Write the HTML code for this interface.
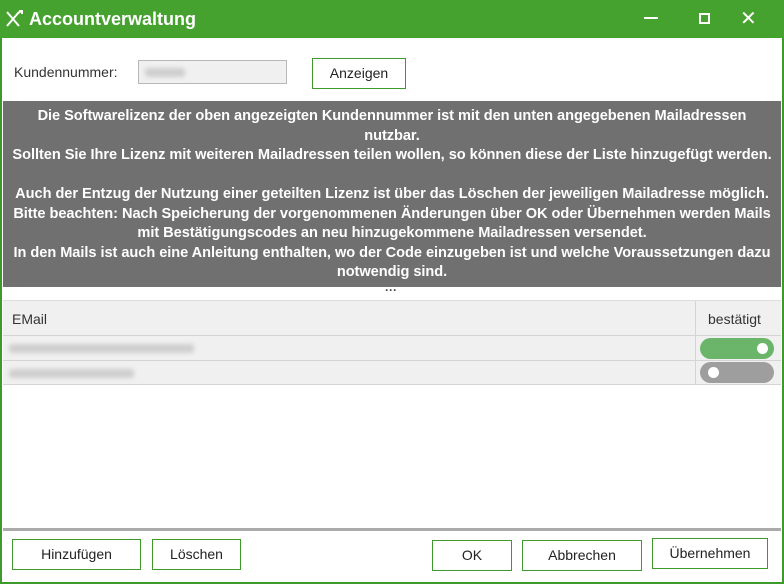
<!DOCTYPE html>
<html><head><style>
*{box-sizing:border-box;margin:0;padding:0}
body{width:784px;height:584px;background:#fff;font-family:"Liberation Sans",sans-serif;position:relative;overflow:hidden;font-size:13px;color:#222}
.win{position:absolute;left:0;top:0;width:784px;height:584px;border:2px solid #3e9a2c;border-top:none;background:#fff}
.title{position:absolute;left:0;top:0;width:784px;height:38px;background:#45a22e;color:#fff}
.title .t{position:absolute;left:29px;top:9px;font-size:18px;font-weight:bold}
.ab{position:absolute;font-size:13px}
.btn{position:absolute;border:1px solid #3e9a2c;background:#fff;text-align:center;font-size:14px;color:#222}
.info{position:absolute;left:3px;top:101px;width:778px;height:186px;background:#707070;color:#fff;font-weight:bold;font-size:14.6px;text-align:center;line-height:19.5px;padding-top:6px;white-space:nowrap;letter-spacing:-0.05px}
.grid{position:absolute;left:3px;top:300px;width:778px;height:231px;border-bottom:3px solid #aaa;border-top:1px solid #ddd}
.row{position:absolute;left:0;width:778px;border-bottom:1px solid #d4d4d4;background:#f0f0f0}
.blur{position:absolute;height:9px;background:#cfcfcf;filter:blur(2px);border-radius:3px}
</style></head><body>
<div class="win"></div>
<div class="title">
<svg style="position:absolute;left:5px;top:10px" width="20" height="18" viewBox="0 0 20 18" fill="none" stroke="#fff" stroke-width="2"><path d="M2 2l12 14M14 2L2 16M12 4l4-3M14 1h3v3"/></svg>
<div class="t">Accountverwaltung</div>
<div class="ab" style="left:644px;top:9px;width:14px;height:10px;border-bottom:2px solid #fff"></div>
<div class="ab" style="left:699px;top:13px;width:11px;height:11px;border:2px solid #fff"></div>
<div class="ab" style="left:740px;top:6px;color:#fff;font-size:20px">✕</div>
</div>
<div class="ab" style="left:14px;top:64px;font-size:14px;color:#333">Kundennummer:</div>
<div class="ab" style="left:138px;top:60px;width:149px;height:24px;background:#f0f0f0;border:1px solid #b8b8b8"><div class="blur" style="left:6px;top:7px;width:40px"></div></div>
<div class="btn" style="left:312px;top:58px;width:94px;height:31px;line-height:29px">Anzeigen</div>
<div class="info">Die Softwarelizenz der oben angezeigten Kundennummer ist mit den unten angegebenen Mailadressen<br>nutzbar.<br>Sollten Sie Ihre Lizenz mit weiteren Mailadressen teilen wollen, so können diese der Liste hinzugefügt werden.<br><br>Auch der Entzug der Nutzung einer geteilten Lizenz ist über das Löschen der jeweiligen Mailadresse möglich.<br>Bitte beachten: Nach Speicherung der vorgenommenen Änderungen über OK oder Übernehmen werden Mails<br>mit Bestätigungscodes an neu hinzugekommene Mailadressen versendet.<br>In den Mails ist auch eine Anleitung enthalten, wo der Code einzugeben ist und welche Voraussetzungen dazu<br>notwendig sind.</div>
<div class="ab" style="left:385px;top:283px;font-weight:bold;color:#444;font-size:12px">···</div>
<div class="grid">
<div class="row" style="top:0;height:35px"><span class="ab" style="left:9px;top:10px;font-size:14px;color:#333">EMail</span><span class="ab" style="left:692px;top:0;width:1px;height:35px;background:#d4d4d4"></span><span class="ab" style="left:705px;top:10px;font-size:14px;color:#333">bestätigt</span></div>
<div class="row" style="top:35px;height:25px"><div class="blur" style="left:6px;top:8px;width:185px"></div><span class="ab" style="left:692px;top:0;width:1px;height:25px;background:#d4d4d4"></span><div class="ab" style="left:697px;top:2px;width:74px;height:21px;border-radius:11px;background:#6bb56a"><div class="ab" style="left:57px;top:5px;width:11px;height:11px;border-radius:50%;background:#fff"></div></div></div>
<div class="row" style="top:60px;height:24px"><div class="blur" style="left:6px;top:8px;width:125px"></div><span class="ab" style="left:692px;top:0;width:1px;height:24px;background:#d4d4d4"></span><div class="ab" style="left:697px;top:1px;width:74px;height:21px;border-radius:11px;background:#9e9e9e"><div class="ab" style="left:8px;top:5px;width:11px;height:11px;border-radius:50%;background:#fff"></div></div></div>
</div>
<div class="btn" style="left:12px;top:539px;width:129px;height:31px;line-height:29px">Hinzufügen</div>
<div class="btn" style="left:152px;top:539px;width:89px;height:31px;line-height:29px">Löschen</div>
<div class="btn" style="left:432px;top:540px;width:80px;height:31px;line-height:29px">OK</div>
<div class="btn" style="left:522px;top:540px;width:120px;height:31px;line-height:29px">Abbrechen</div>
<div class="btn" style="left:652px;top:538px;width:116px;height:31px;line-height:29px">Übernehmen</div>
</body></html>
